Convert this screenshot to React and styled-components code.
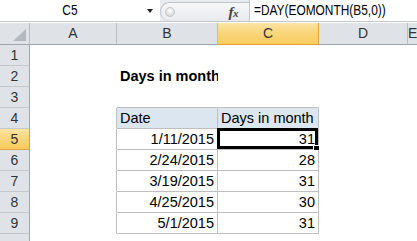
import React from 'react';
import styled, { createGlobalStyle } from 'styled-components';

const GlobalStyle = createGlobalStyle`
  html, body { margin: 0; padding: 0; background: #fff; overflow: hidden; }
  body { font-family: "Liberation Sans", Arial, sans-serif; color: #000; }
  * { box-sizing: border-box; }
`;

const Window = styled.div`
  width: 417px;
  height: 241px;
  overflow: hidden;
  display: flex;
  flex-direction: column;
  background: #fff;
`;

const FormulaBar = styled.div`
  display: flex;
  height: 22px;
  border-bottom: 1px solid #c3c7cc;
  background: #e9ecef;
`;

const NameBox = styled.div`
  width: 160px;
  background: #fff;
  display: flex;
  align-items: center;
`;

const NameText = styled.div`
  flex: 1;
  text-align: center;
  font-size: 14px;
  line-height: 21px;
`;

const Narrow = styled.span`
  display: inline-block;
  transform: scaleX(0.85);
  transform-origin: ${(p) => (p.$origin === 'left' ? 'left' : 'center')};
  white-space: nowrap;
`;

const DropArrow = styled.div`
  width: 20px;
  display: flex;
  justify-content: center;
  align-items: center;
  &::after {
    content: '';
    border-left: 3.5px solid transparent;
    border-right: 3.5px solid transparent;
    border-top: 4px solid #222;
    margin-top: 1px;
  }
`;

const FxArea = styled.div`
  width: 89px;
  margin-top: 2px;
  display: flex;
  align-items: center;
  border: 1px solid #bfc3c8;
  border-right: none;
  border-bottom: none;
  border-radius: 10px 0 0 10px;
  background: linear-gradient(180deg, #f6f7f8 0%, #e8eaed 100%);
`;

const Grip = styled.div`
  width: 10px;
  height: 10px;
  margin-left: 4px;
  border-radius: 50%;
  border: 1px solid #c4c6c9;
  background: radial-gradient(circle at 50% 35%, #ffffff 0%, #dcdcdc 70%, #c8c8c8 100%);
`;

const Fx = styled.div`
  margin-left: auto;
  margin-right: 11px;
  font-family: "Liberation Serif", "Times New Roman", serif;
  font-style: italic;
  font-weight: bold;
  color: #444;
  font-size: 15px;
  line-height: 18px;
  letter-spacing: -0.5px;
  & small {
    font-size: 11px;
  }
`;

const FormulaInput = styled.div`
  flex: 1;
  background: #fff;
  border-left: 1px solid #c3c7cc;
  padding-left: 4px;
  font-size: 14px;
  line-height: 21px;
`;

const Spacer = styled.div`
  height: 4px;
  border-top: 1px solid #ffffff;
  background: #dde1e6;
`;

const Sheet = styled.div`
  display: grid;
  grid-template-columns: 30px 87px 101px 101px 89px 1fr;
  grid-template-rows: 22px;
  grid-auto-rows: 21px;
`;

const ColHeader = styled.div`
  background: ${(p) =>
    p.$selected ? 'linear-gradient(180deg, #fbe4a4 0%, #f9d57a 50%, #f7cb5e 100%)' : '#dfe3e8'};
  border-right: 1px solid ${(p) => (p.$selected ? '#e2a33e' : '#b9bec5')};
  border-bottom: 1px solid ${(p) => (p.$selected ? '#e89b2e' : '#9fa5ad')};
  color: #333;
  font-size: 14px;
  line-height: 21px;
  text-align: center;
  position: relative;
`;

const Corner = styled(ColHeader)`
  display: flex;
  align-items: flex-end;
  justify-content: flex-end;
  padding: 0 3px 3px 0;
`;

const RowHeader = styled.div`
  background: ${(p) =>
    p.$selected ? 'linear-gradient(180deg, #fbe4a4 0%, #f9d57a 50%, #f7cb5e 100%)' : '#dfe3e8'};
  border-right: 1px solid ${(p) => (p.$selected ? '#e89b2e' : '#9fa5ad')};
  border-bottom: 1px solid ${(p) => (p.$selected ? '#e2a33e' : '#c3c8ce')};
  color: #333;
  font-size: 14px;
  line-height: 20px;
  text-align: center;
`;

const Cell = styled.div`
  position: relative;
  background: ${(p) => p.$fill || '#fff'};
  border-right: 1px solid ${(p) => p.$rb || 'transparent'};
  border-bottom: 1px solid ${(p) => p.$bb || 'transparent'};
  font-size: 14.5px;
  line-height: 20px;
  padding: 0 3px;
  white-space: nowrap;
  text-align: ${(p) => p.$align || 'left'};
  font-weight: ${(p) => (p.$bold ? 'bold' : 'normal')};
  color: #000;
`;

const Selection = styled.div`
  position: absolute;
  top: -1px;
  left: -1px;
  right: 0;
  bottom: 0;
  border: 3px solid #000;
  pointer-events: none;
`;

const FillHandle = styled.div`
  position: absolute;
  right: -5px;
  bottom: -6px;
  width: 7px;
  height: 7px;
  background: #000;
  border: 1px solid #fff;
`;

const COLS = ['A', 'B', 'C', 'D', 'E'];
const VISIBLE_ROWS = 9;
const TOTAL_ROWS = 10;
const GRID = '#bfbfbf';
const HEAD_FILL = '#dce6f1';

const data = {
  '2,1': { v: 'Days in month', bold: true },
  '4,1': { v: 'Date', fill: HEAD_FILL },
  '4,2': { v: 'Days in month', fill: HEAD_FILL },
  '5,1': { v: '1/11/2015', align: 'right' },
  '6,1': { v: '2/24/2015', align: 'right' },
  '7,1': { v: '3/19/2015', align: 'right' },
  '8,1': { v: '4/25/2015', align: 'right' },
  '9,1': { v: '5/1/2015', align: 'right' },
  '5,2': { v: '31', align: 'right' },
  '6,2': { v: '28', align: 'right' },
  '7,2': { v: '31', align: 'right' },
  '8,2': { v: '30', align: 'right' },
  '9,2': { v: '31', align: 'right' },
};

const inTable = (r, c) => r >= 4 && r <= 9 && c >= 1 && c <= 2;
const SEL = { r: 5, c: 2 };

function CornerTriangle() {
  return (
    <svg width="13" height="12" viewBox="0 0 13 12">
      <polygon points="13,0 13,12 0,12" fill="#b4b9c0" />
    </svg>
  );
}

export default function App() {
  const cells = [];
  cells.push(
    <Corner key="corner">
      <CornerTriangle />
    </Corner>
  );
  COLS.forEach((col, ci) =>
    cells.push(
      <ColHeader key={`h${col}`} $selected={ci === SEL.c}>
        {col}
      </ColHeader>
    )
  );
  for (let r = 1; r <= TOTAL_ROWS; r++) {
    cells.push(
      <RowHeader key={`r${r}`} $selected={r === SEL.r}>
        {r <= VISIBLE_ROWS ? r : ''}
      </RowHeader>
    );
    COLS.forEach((_, c) => {
      const d = data[`${r},${c}`] || {};
      const rb = inTable(r, c) || inTable(r, c + 1) ? GRID : undefined;
      const bb = inTable(r, c) || inTable(r + 1, c) ? GRID : undefined;
      const selected = r === SEL.r && c === SEL.c;
      cells.push(
        <Cell
          key={`c${r}-${c}`}
          $rb={rb}
          $bb={bb}
          $fill={d.fill}
          $align={d.align}
          $bold={d.bold}
        >
          {d.v}
          {selected && (
            <Selection>
              <FillHandle />
            </Selection>
          )}
        </Cell>
      );
    });
  }

  return (
    <>
      <GlobalStyle />
      <Window>
        <FormulaBar>
          <NameBox>
            <NameText>
              <Narrow>C5</Narrow>
            </NameText>
            <DropArrow />
          </NameBox>
          <FxArea>
            <Grip />
            <Fx>
              f<small>x</small>
            </Fx>
          </FxArea>
          <FormulaInput>
            <Narrow $origin="left">=DAY(EOMONTH(B5,0))</Narrow>
          </FormulaInput>
        </FormulaBar>
        <Spacer />
        <Sheet>{cells}</Sheet>
      </Window>
    </>
  );
}
